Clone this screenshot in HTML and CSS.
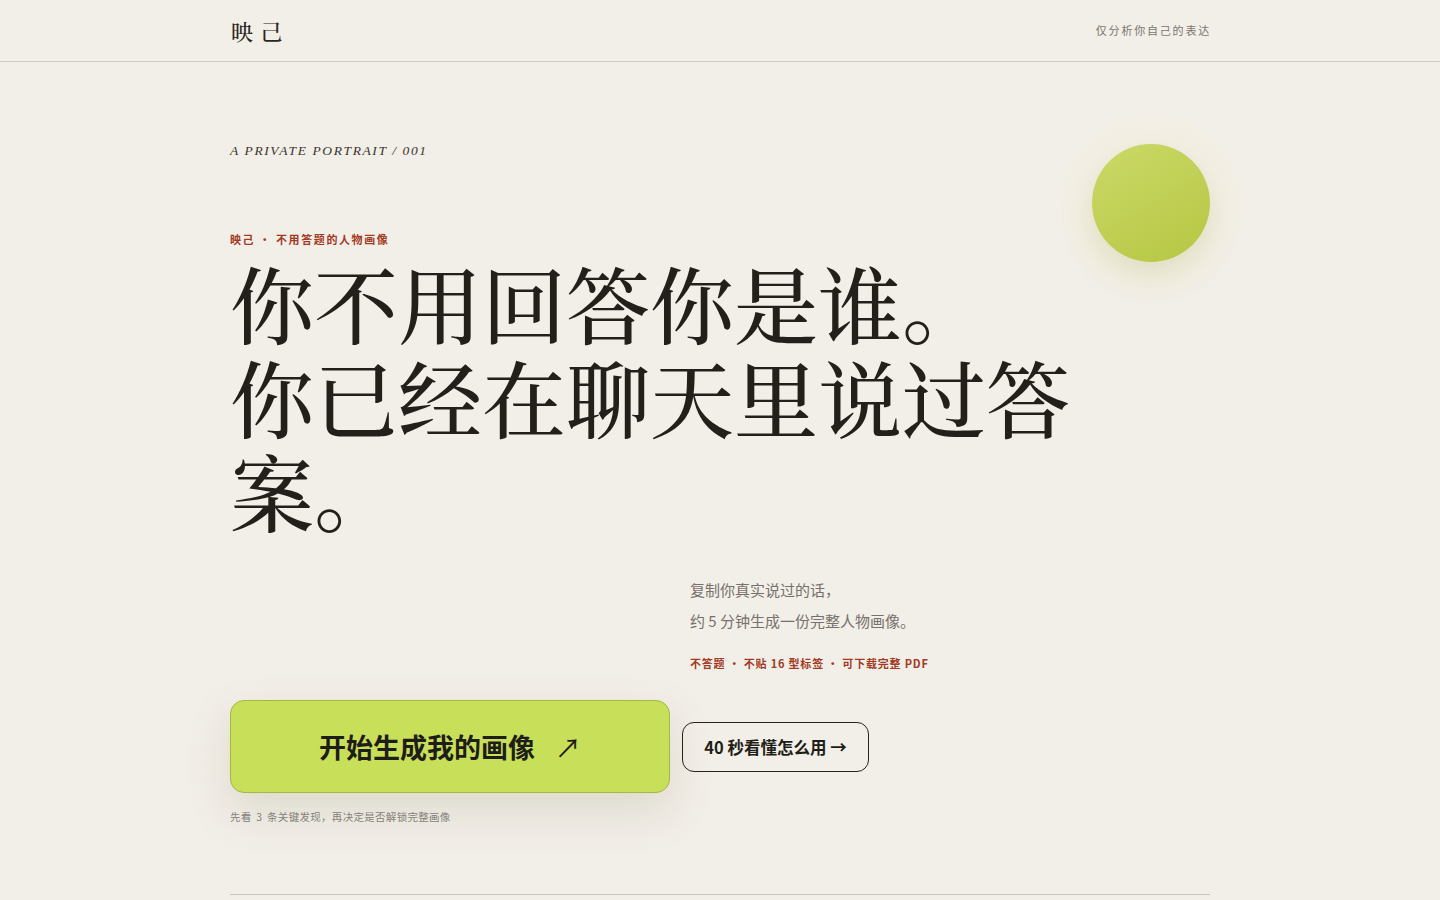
FILE: index.html
```html
<!DOCTYPE html>
<html lang="zh-CN">
<head>
<meta charset="utf-8">
<title>映己</title>
<link rel="stylesheet" href="styles.css">
</head>
<body>
<header class="topbar">
  <div class="wrap topbar-inner">
    <div class="logo">映 己</div>
    <div class="tagline">仅分析你自己的表达</div>
  </div>
</header>
<main class="wrap hero">
  <div class="orb"></div>
  <p class="kicker">A PRIVATE PORTRAIT / 001</p>
  <p class="eyebrow">映己 · 不用答题的人物画像</p>
  <h1 class="headline">你不用回答你是谁。<br>你已经在聊天里说过答案。</h1>
  <div class="lede">
    <p class="lede-text">复制你真实说过的话，<br>约 5 分钟生成一份完整人物画像。</p>
    <p class="lede-tags">不答题 · 不贴 16 型标签 · 可下载完整 PDF</p>
  </div>
  <div class="actions">
    <a class="btn-primary" href="#"><span>开始生成我的画像</span><span class="arrow">↗</span></a>
    <a class="btn-ghost" href="#">40 秒看懂怎么用 →</a>
  </div>
  <p class="note">先看 3 条关键发现，再决定是否解锁完整画像</p>
  <div class="rule"></div>
</main>
</body>
</html>
```

FILE: styles.css
```css
* { box-sizing: border-box; }
html, body { margin: 0; padding: 0; }
body {
  background: #f2eee8;
  color: #232019;
  font-family: "Noto Sans CJK SC", "Noto Sans", sans-serif;
  height: 900px;
  overflow: hidden;
}
.wrap { width: 980px; margin: 0 auto; }
.topbar { border-bottom: 1px solid #cfcac2; height: 62px; }
.topbar-inner { display: flex; justify-content: space-between; align-items: center; height: 60px; }
.logo {
  font-family: "Noto Serif CJK SC", "Liberation Serif", serif;
  font-size: 22px;
  font-weight: 500;
  letter-spacing: 1px;
  color: #2a2620;
  padding-left: 1px;
}
.tagline { font-size: 11px; color: #7a7670; letter-spacing: 1.8px; margin-right: -1px; }
.hero { position: relative; padding-top: 80px; }
.orb {
  position: absolute;
  right: 0;
  top: 82px;
  width: 118px;
  height: 118px;
  border-radius: 50%;
  background: linear-gradient(150deg, #cbd968 0%, #b6c642 100%);
  box-shadow: 0 12px 30px rgba(160, 170, 80, 0.25), 0 0 0 30px rgba(245, 240, 225, 0.5);
}
.kicker {
  margin: 0;
  font-family: "Liberation Serif", serif;
  font-style: italic;
  font-size: 13.5px;
  letter-spacing: 1.6px;
  color: #3a352e;
  line-height: 18px;
}
.eyebrow {
  margin: 71px 0 0;
  font-size: 11px;
  font-weight: 700;
  letter-spacing: 1.6px;
  color: #a33a22;
  line-height: 16px;
}
.headline {
  margin: 8px 0 0;
  max-width: 880px;
  font-family: "Noto Serif CJK SC", "Liberation Serif", serif;
  font-weight: 500;
  font-size: 84px;
  line-height: 94px;
  color: #231f1a;
  letter-spacing: 0;
}
.lede { margin: 37px 0 0 460px; }
.lede-text { margin: 0; font-size: 15px; line-height: 31px; color: #76716a; }
.lede-tags {
  margin: 19px 0 0;
  font-size: 11px;
  font-weight: 700;
  letter-spacing: 0.8px;
  color: #a33a22;
}
.actions { display: flex; align-items: center; gap: 12px; margin-top: 29px; }
.btn-primary {
  display: flex;
  align-items: center;
  justify-content: center;
  gap: 20px;
  width: 440px;
  height: 93px;
  background: #c8df5a;
  border: 1px solid #a4b845;
  border-radius: 14px;
  color: #1f1d17;
  font-size: 27px;
  font-weight: 700;
  text-decoration: none;
  box-shadow: 0 18px 40px rgba(150, 150, 110, 0.22);
}
.btn-primary .arrow { font-size: 26px; font-weight: 400; }
.btn-ghost {
  display: flex;
  align-items: center;
  justify-content: center;
  width: 187px;
  height: 50px;
  border: 1px solid #26221c;
  border-radius: 12px;
  color: #1f1d17;
  font-size: 16.5px;
  font-weight: 700;
  text-decoration: none;
}
.note { margin: 16px 0 0; font-size: 10.5px; letter-spacing: 0.3px; word-spacing: 2px; color: #86817a; }
.rule { margin-top: 70px; height: 1px; background: #c9c3ba; }
```
